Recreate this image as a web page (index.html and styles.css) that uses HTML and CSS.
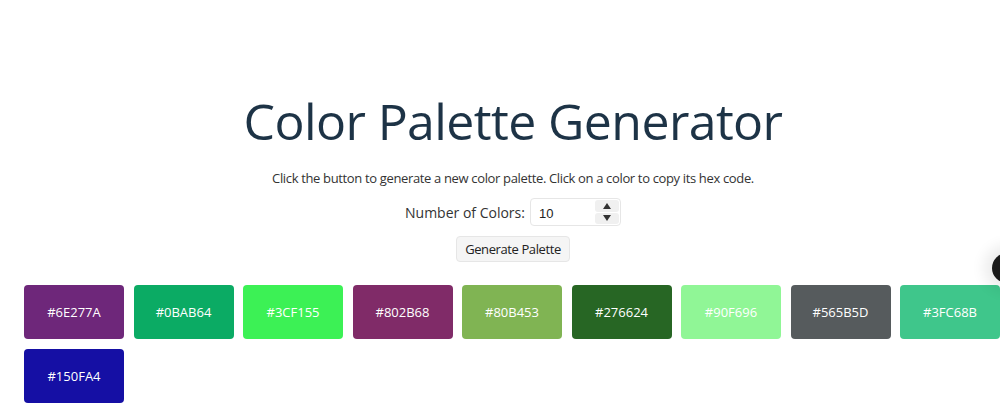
FILE: index.html
```html
<!DOCTYPE html>
<html lang="en">
<head>
    <meta charset="UTF-8">
    <meta name="viewport" content="width=device-width, initial-scale=1.0">
    <title>Color Palette Generator</title>
    <link rel="stylesheet" href="styles.css">
</head>
<body>
    <div class="container">
        <h1>Color Palette Generator</h1>
        <p class="subtitle">Click the button to generate a new color palette. Click on a color to copy its hex code.</p>
        <div class="controls">
            <label for="count">Number of Colors:</label>
            <div class="number-input">
                <input type="text" id="count" value="10">
                <span class="spinner">
                    <span class="arrow up"></span>
                    <span class="arrow down"></span>
                </span>
            </div>
        </div>
        <div class="actions">
            <button type="button" id="generate">Generate Palette</button>
        </div>
    </div>

    <!-- Palette -->
    <div class="palette">
        <div class="swatch" style="background-color: #6E277A;">#6E277A</div>
        <div class="swatch" style="background-color: #0BAB64;">#0BAB64</div>
        <div class="swatch" style="background-color: #3CF155;">#3CF155</div>
        <div class="swatch" style="background-color: #802B68;">#802B68</div>
        <div class="swatch" style="background-color: #80B453;">#80B453</div>
        <div class="swatch" style="background-color: #276624;">#276624</div>
        <div class="swatch" style="background-color: #90F696;">#90F696</div>
        <div class="swatch" style="background-color: #565B5D;">#565B5D</div>
        <div class="swatch" style="background-color: #3FC68B;">#3FC68B</div>
        <div class="swatch" style="background-color: #150FA4;">#150FA4</div>
    </div>

    <div class="floating-dot"></div>
</body>
</html>
```

FILE: styles.css
```css
/* General Page Styles */
html, body {
    overflow: hidden;
}

body {
    margin: 0;
    padding: 0;
    width: 1026px;
    font-family: 'Open Sans', 'Noto Sans', sans-serif;
    background-color: #ffffff;
    color: #212529;
}

/* Header Block */
.container {
    text-align: center;
    padding-top: 91px;
}

h1 {
    margin: 0;
    font-size: 50px;
    font-weight: 400;
    line-height: 60px;
    color: #1d3346;
    letter-spacing: -0.6px;
}

.subtitle {
    margin: 17px 0 0;
    font-size: 13px;
    line-height: 20px;
    letter-spacing: -0.35px;
    color: #333;
}

/* Number Input Row */
.controls {
    display: flex;
    justify-content: center;
    align-items: center;
    gap: 5px;
    margin-top: 10px;
    height: 28px;
    font-size: 14px;
    color: #333;
}

.number-input {
    position: relative;
    width: 91px;
    height: 28px;
    border: 1px solid #e6e6e6;
    border-radius: 4px;
    box-sizing: border-box;
}

.number-input input {
    display: block;
    width: 100%;
    height: 100%;
    box-sizing: border-box;
    border: none;
    background: transparent;
    padding: 2px 8px 0;
    font-family: 'Liberation Sans', Arial, sans-serif;
    font-size: 13px;
    color: #222;
    outline: none;
}

.spinner {
    position: absolute;
    right: 1px;
    top: 1px;
    bottom: 1px;
    width: 24px;
    display: flex;
    flex-direction: column;
    gap: 1px;
}

.arrow {
    flex: 1;
    background-color: #f0f0f0;
    border-radius: 3px;
    position: relative;
}

.arrow::after {
    content: "";
    position: absolute;
    left: 50%;
    top: 50%;
    transform: translate(-50%, -50%);
    border-left: 4px solid transparent;
    border-right: 4px solid transparent;
}

.arrow.up::after {
    border-bottom: 6px solid #333;
}

.arrow.down::after {
    border-top: 6px solid #333;
}

/* Button Styles */
.actions {
    display: flex;
    justify-content: center;
    margin-top: 10px;
}

button#generate {
    margin: 0;
    padding: 3px 8px;
    font-family: 'Open Sans', 'Noto Sans', sans-serif;
    font-size: 13px;
    line-height: 18px;
    letter-spacing: -0.4px;
    color: #222;
    background-color: #f5f5f5;
    border: 1px solid #e6e6e6;
    border-radius: 4px;
    cursor: pointer;
}

/* Palette Grid */
.palette {
    display: flex;
    flex-wrap: wrap;
    row-gap: 10px;
    column-gap: 9.5px;
    padding-left: 24px;
    margin-top: 23px;
}

.swatch {
    width: 100px;
    height: 54px;
    border-radius: 4px;
    display: flex;
    justify-content: center;
    align-items: center;
    color: #ffffff;
    font-size: 13px;
    cursor: pointer;
}

/* Floating Dot */
.floating-dot {
    position: fixed;
    right: -22px;
    top: 253px;
    width: 30px;
    height: 30px;
    border-radius: 50%;
    background-color: #1a1a1a;
    box-shadow: 0 0 14px 8px rgba(0, 0, 0, 0.08);
}
```
